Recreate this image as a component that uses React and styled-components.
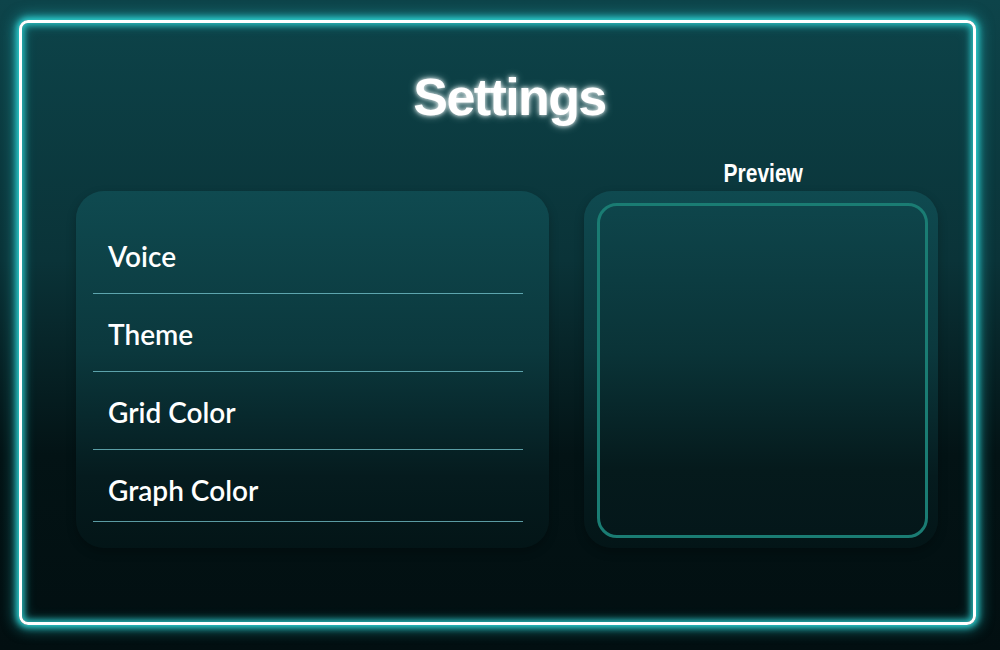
import React from 'react';
import styled, { createGlobalStyle } from 'styled-components';

const GlobalStyle = createGlobalStyle`
  html, body {
    margin: 0;
    padding: 0;
    height: 650px;
    overflow: hidden;
  }
  body {
    background: linear-gradient(180deg, #0d444a 0%, #0a3338 40%, #031315 70%, #020f11 100%);
    font-family: "Liberation Sans", Arial, sans-serif;
  }
`;

const Frame = styled.div`
  box-sizing: border-box;
  width: 957px;
  height: 605px;
  margin: 20px 0 0 19px;
  border: 3px solid #ffffff;
  border-radius: 9px;
  box-shadow: 0 0 6px 2px #2fd6d6, 0 0 14px 4px rgba(40, 200, 205, 0.6),
    inset 0 0 6px 2px rgba(47, 214, 214, 0.85), inset 0 0 12px 3px rgba(40, 200, 205, 0.3);
  display: flex;
  flex-direction: column;
  align-items: center;
`;

const Title = styled.h1`
  margin: 44px 0 0 0;
  font-family: "Liberation Sans", Arial, sans-serif;
  font-weight: 700;
  font-size: 52px;
  letter-spacing: -1.6px;
  line-height: 60px;
  color: #ffffff;
  text-shadow: 0 0 4px rgba(255, 255, 255, 0.9), 0 0 9px rgba(200, 230, 230, 0.7);
  transform: translateX(12px);
`;

const Body = styled.div`
  display: flex;
  gap: 35px;
  margin-top: 35px;
  align-self: stretch;
  padding-left: 54px;
`;

const Panel = styled.div`
  box-sizing: border-box;
  width: ${(p) => p.$width}px;
  height: 357px;
  border-radius: 28px;
  background: linear-gradient(180deg, #0f4a50 0%, #0b383d 45%, #051b1e 80%, #031517 100%);
  box-shadow: 0 4px 10px rgba(0, 0, 0, 0.25);
`;

const Menu = styled(Panel)`
  padding: 24px 26px 0 17px;
  margin-top: 29px;
`;

const MenuItem = styled.div`
  padding: 25px 15px 21px;
  font-family: Lato, "Open Sans", sans-serif;
  font-weight: 600;
  font-size: 28px;
  line-height: 31px;
  color: #ffffff;
  border-bottom: 1px solid rgba(120, 200, 210, 0.75);

  &:first-child {
    padding-top: 26px;
  }

  &:last-child {
    padding-bottom: 15px;
  }
`;

const PreviewColumn = styled.div`
  display: flex;
  flex-direction: column;
  align-items: center;
`;

const PreviewLabel = styled.div`
  font-family: "Liberation Sans", Arial, sans-serif;
  font-weight: 700;
  font-size: 25px;
  line-height: 22px;
  margin-bottom: 7px;
  color: #ffffff;
  transform: translateX(2px) scaleX(0.84);
`;

const PreviewPanel = styled(Panel)`
  padding: 12px 10px 10px 13px;
`;

const PreviewBox = styled.div`
  box-sizing: border-box;
  height: 100%;
  border: 3px solid #1a7c73;
  border-radius: 20px;
  background: linear-gradient(180deg, #0e454b 0%, #0a3337 45%, #051a1c 80%, #04171a 100%);
`;

const items = ['Voice', 'Theme', 'Grid Color', 'Graph Color'];

const App = () => {
  return (
    <>
      <GlobalStyle />
      <Frame>
        <Title>Settings</Title>
        <Body>
          <Menu $width={473}>
            {items.map((item) => (
              <MenuItem key={item}>{item}</MenuItem>
            ))}
          </Menu>
          <PreviewColumn>
            <PreviewLabel>Preview</PreviewLabel>
            <PreviewPanel $width={354}>
              <PreviewBox />
            </PreviewPanel>
          </PreviewColumn>
        </Body>
      </Frame>
    </>
  );
};

export default App;
